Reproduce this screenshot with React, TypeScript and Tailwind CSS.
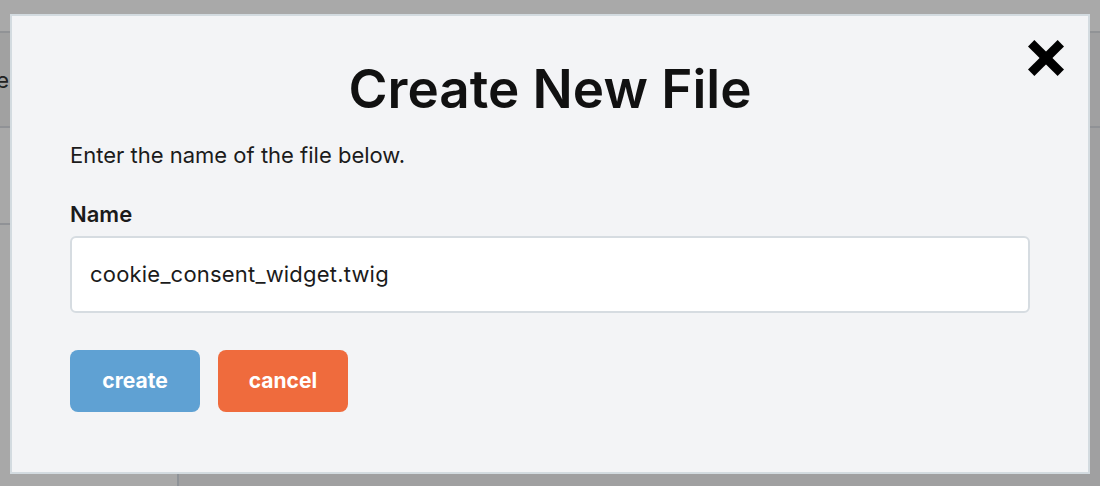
import React from "react";

export default function App() {
  const font = { fontFamily: "Inter, 'Noto Sans', sans-serif" };
  return (
    <div className="relative w-[1100px] h-[486px] overflow-hidden bg-[#a8a8a8]" style={font}>
      {/* underlying page behind the overlay */}
      <div className="flex flex-col h-full">
        <div className="h-[33px] bg-[#a9a9a9] border-b-2 border-[#919396]" />
        <div className="flex flex-1">
          <div className="w-[179px] flex flex-col bg-[#a8a8a8] border-r-2 border-[#8f9398]">
            <div className="h-[95px] bg-[#a1a1a1] border-b-2 border-[#909296] flex items-center">
              <div className="w-[9px] overflow-hidden flex justify-end">
                <span className="whitespace-nowrap text-[22px] leading-[24px] text-[#222]">Home</span>
              </div>
            </div>
            <div className="h-[97px] border-b-2 border-[#909296]" />
          </div>
          <div className="flex-1 bg-[#a0a0a1] flex flex-col">
            <div className="h-[95px] border-b-2 border-[#909296]" />
          </div>
        </div>
      </div>

      {/* modal */}
      <div className="absolute left-[10px] top-[14px] w-[1080px] h-[460px] bg-[#f3f4f6] border-2 border-[#d3dbe0] px-[58px]">
        <button className="absolute right-[24px] top-[24px] w-[36px] h-[36px]">
          <svg viewBox="0 0 36 36" width="36" height="36">
            <line x1="3.2" y1="3.2" x2="32.8" y2="32.8" stroke="#000" strokeWidth="9" />
            <line x1="32.8" y1="3.2" x2="3.2" y2="32.8" stroke="#000" strokeWidth="9" />
          </svg>
        </button>
        <h1 className="text-center text-[53px] leading-[60px] font-semibold text-[#111] pt-[43px]">
          Create New File
        </h1>
        <p className="mt-[24px] text-[22px] leading-[24px] text-[#1b1b1b]">Enter the name of the file below.</p>
        <label className="block mt-[35px] text-[22px] leading-[24px] font-semibold text-[#1b1b1b]">Name</label>
        <div className="mt-[10px] h-[77px] bg-white border-2 border-[#d6dce1] rounded-[6px] flex items-center px-[18px] text-[22px] tracking-[0.2px] text-[#1b1b1b]">
          cookie_consent_widget.twig
        </div>
        <div className="mt-[37px] flex gap-[18px]">
          <button className="w-[130px] h-[62px] rounded-[8px] bg-[#5fa1d3] text-white text-[21px] font-bold">create</button>
          <button className="w-[130px] h-[62px] rounded-[8px] bg-[#ef6b3d] text-white text-[21px] font-bold">cancel</button>
        </div>
      </div>
    </div>
  );
}
